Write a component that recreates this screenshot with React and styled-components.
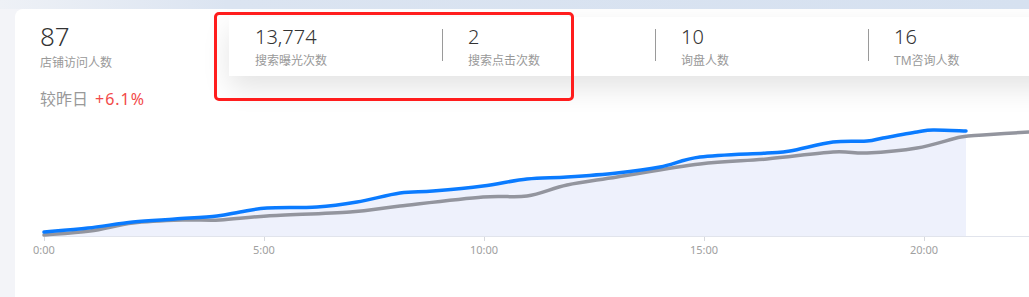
import React from 'react'
import styled, { createGlobalStyle } from 'styled-components'

const GlobalStyle = createGlobalStyle`
  html, body {
    margin: 0;
    padding: 0;
  }
  body {
    width: 1029px;
    height: 297px;
    overflow: hidden;
    background: #f3f4f8;
    font-family: "Noto Sans", "Noto Sans CJK SC", sans-serif;
  }
`

const Page = styled.div`
  position: relative;
  height: 297px;
  padding-top: 9px;
  padding-left: 15px;
  box-sizing: border-box;
  background: linear-gradient(90deg, #eef1f6 0, #dbe4f1 22%, #d6e1f0 100%) top / 100% 9px no-repeat,
    #f3f4f8;
`

const Card = styled.div`
  height: 288px;
  background: #ffffff;
  border-top-left-radius: 8px;
  padding-top: 8px;
  box-sizing: border-box;
  overflow: hidden;
`

const TopRow = styled.div`
  display: flex;
  align-items: flex-start;
`

const MainMetric = styled.div`
  width: 214px;
  padding-left: 25px;
  padding-top: 1px;
  flex-shrink: 0;
  box-sizing: border-box;
`

const MainValue = styled.div`
  font-size: 26px;
  line-height: 36px;
  color: #333333;
  font-weight: 300;
`

const Label = styled.div`
  font-size: 12px;
  line-height: 17px;
  color: #999999;
  white-space: nowrap;
`

const Panel = styled.div`
  display: flex;
  flex: 1;
  height: 59px;
  background: #ffffff;
  box-shadow: 0 12px 28px rgba(0, 0, 0, 0.11);
  padding-top: 12px;
  box-sizing: border-box;
`

const Stat = styled.div`
  width: 214px;
  flex-shrink: 0;
  box-sizing: border-box;
  padding-left: ${(p) => (p.first ? 26 : 25)}px;
  height: 32px;
  border-left: ${(p) => (p.first ? 'none' : '1px solid #9a9a9a')};
  margin-left: ${(p) => (p.first ? 0 : -1)}px;
`

const StatValue = styled.div`
  font-size: 20px;
  line-height: 27px;
  color: #333333;
  font-weight: 300;
  margin-top: -6px;
`

const StatLabel = styled(Label)`
  margin-top: 2px;
`

const Compare = styled.div`
  padding-left: 25px;
  margin-top: 12px;
  font-size: 16px;
  line-height: 22px;
  color: #999999;
`

const Up = styled.span`
  color: #f24a4a;
  margin-left: 7px;
  letter-spacing: 1px;
`

const Chart = styled.svg`
  display: block;
  margin-top: 9px;
`

const Highlight = styled.div`
  position: absolute;
  left: 214px;
  top: 12px;
  width: 360px;
  height: 89px;
  box-sizing: border-box;
  border: 3px solid #ff1d1d;
  border-radius: 5px;
  pointer-events: none;
`

const stats = [
  { value: '13,774', label: '搜索曝光次数' },
  { value: '2', label: '搜索点击次数' },
  { value: '10', label: '询盘人数' },
  { value: '16', label: 'TM咨询人数' },
]

const blue = [
  [44, 233], [88, 229], [133, 223], [175, 220], [217, 217], [240, 213], [267, 209],
  [317, 208], [357, 203], [400, 194], [433, 192], [483, 187], [527, 180], [567, 178],
  [617, 174], [660, 168], [700, 158], [767, 154], [790, 152], [833, 143], [867, 142],
  [883, 139], [917, 133], [933, 131], [966, 132],
]

const gray = [
  [44, 236], [90, 232], [133, 224], [183, 221], [220, 221], [267, 217], [350, 213],
  [400, 207], [483, 198], [527, 197], [567, 186], [617, 178], [700, 165], [767, 160],
  [833, 153], [867, 154], [917, 149], [961, 138], [983, 136], [1029, 133],
]

// catmull-rom -> cubic bezier
const smooth = (pts) => {
  let d = `M${pts[0][0]},${pts[0][1]}`
  for (let i = 0; i < pts.length - 1; i++) {
    const p0 = pts[i - 1] || pts[i]
    const p1 = pts[i]
    const p2 = pts[i + 1]
    const p3 = pts[i + 2] || p2
    const c1x = p1[0] + (p2[0] - p0[0]) / 6
    const c1y = p1[1] + (p2[1] - p0[1]) / 6
    const c2x = p2[0] - (p3[0] - p1[0]) / 6
    const c2y = p2[1] - (p3[1] - p1[1]) / 6
    d += ` C${c1x},${c1y} ${c2x},${c2y} ${p2[0]},${p2[1]}`
  }
  return d
}

const ticks = ['0:00', '5:00', '10:00', '15:00', '20:00']

const TrendChart = () => {
  const blueLine = smooth(blue)
  const area = `${blueLine} L966,237 L44,237 Z`
  return (
    <Chart width="1014" height="150" viewBox="15 120 1014 150">
      <path d={area} fill="#eef1fc" />
      <line x1="44" y1="237.5" x2="1029" y2="237.5" stroke="#e1e4ec" strokeWidth="1" />
      {ticks.map((t, i) => {
        const x = 44 + i * 220
        return (
          <g key={t}>
            <line x1={x + 0.5} y1="238" x2={x + 0.5} y2="242" stroke="#d6d8de" />
            <text
              x={x}
              y="255"
              textAnchor="middle"
              fontSize="11"
              fill="#a0a0a0"
              fontFamily='"Noto Sans", sans-serif'
            >
              {t}
            </text>
          </g>
        )
      })}
      <path d={smooth(gray)} fill="none" stroke="#93959e" strokeWidth="3.5" strokeLinecap="round" />
      <path d={blueLine} fill="none" stroke="#0a7bff" strokeWidth="3.5" strokeLinecap="round" />
    </Chart>
  )
}

const App = () => {
  return (
    <>
      <GlobalStyle />
      <Page>
        <Card>
          <TopRow>
            <MainMetric>
              <MainValue>87</MainValue>
              <Label>店铺访问人数</Label>
            </MainMetric>
            <Panel>
              {stats.map((s, i) => (
                <Stat key={s.label} first={i === 0}>
                  <StatValue>{s.value}</StatValue>
                  <StatLabel>{s.label}</StatLabel>
                </Stat>
              ))}
            </Panel>
          </TopRow>
          <Compare>
            较昨日<Up>+6.1%</Up>
          </Compare>
          <TrendChart />
        </Card>
        <Highlight />
      </Page>
    </>
  )
}

export default App
